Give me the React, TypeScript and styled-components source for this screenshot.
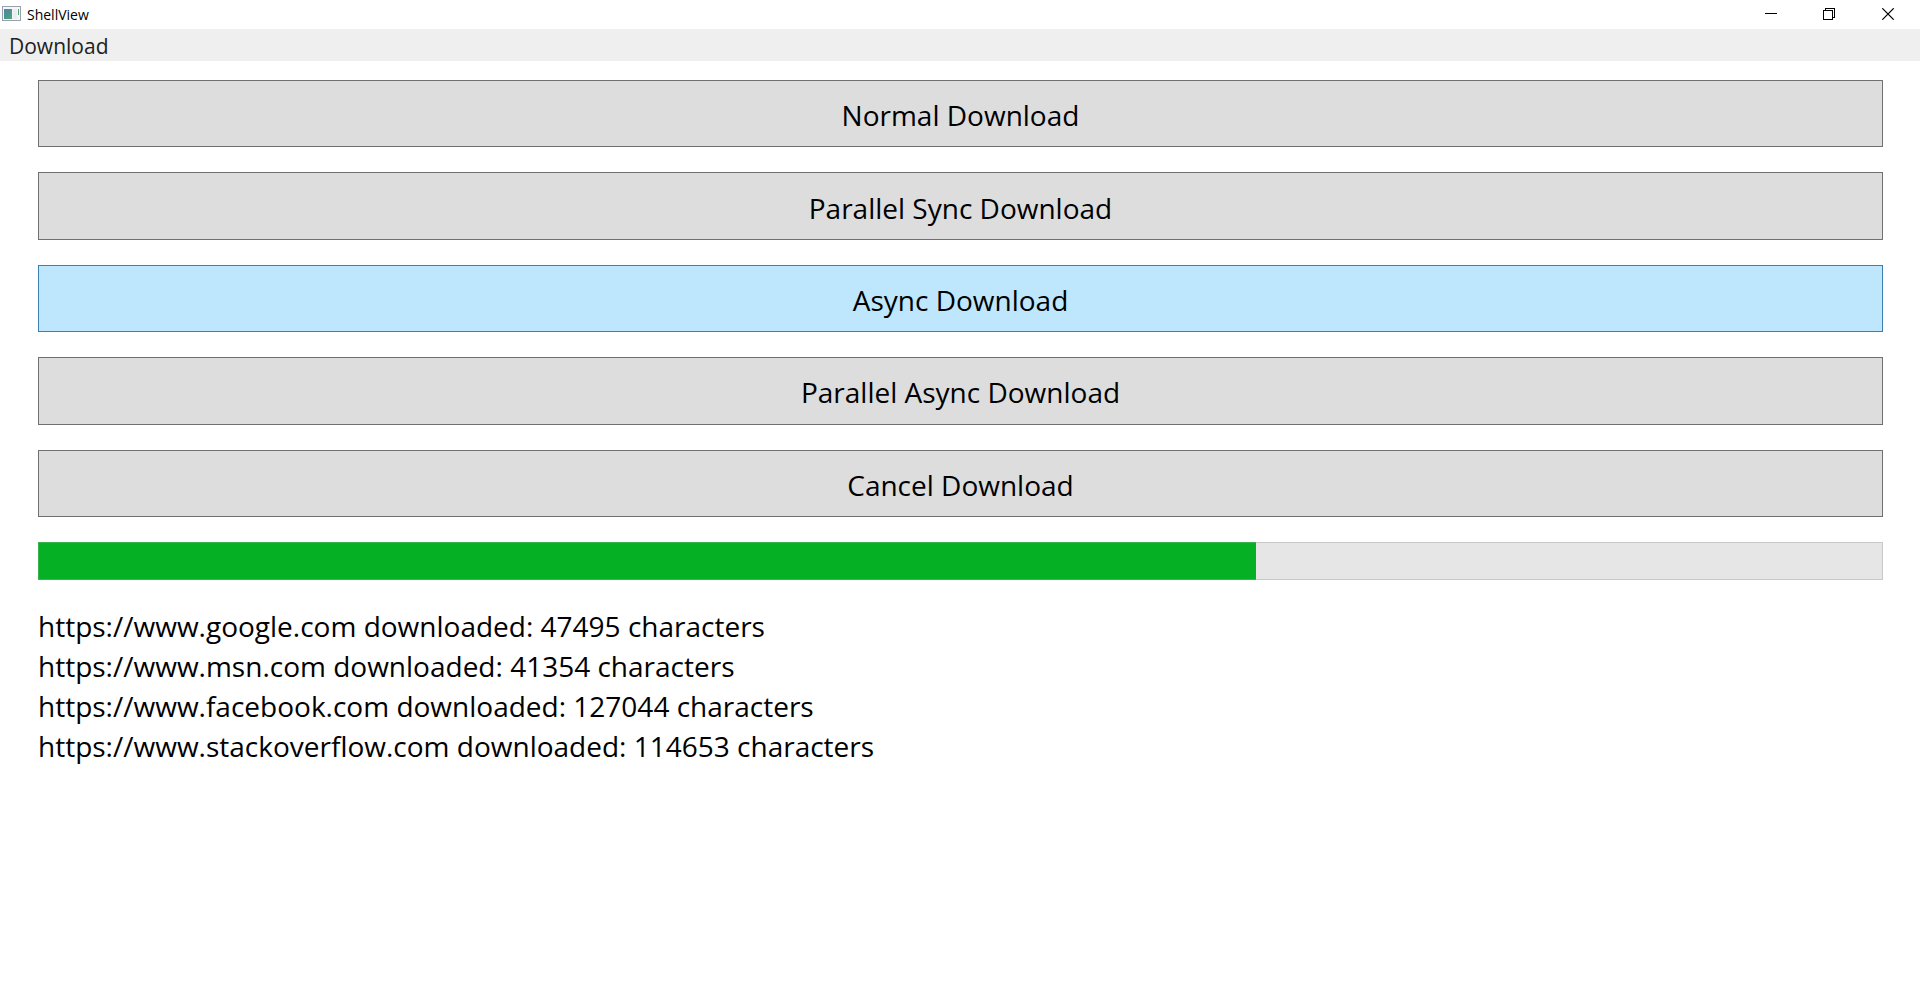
import React from "react";
import styled, { createGlobalStyle } from "styled-components";

const GlobalStyle = createGlobalStyle`
  *, *::before, *::after { box-sizing: border-box; }
  body {
    margin: 0;
    background: #ffffff;
    color: #000000;
    font-family: "Segoe UI", "Open Sans", "Noto Sans", sans-serif;
  }
`;

const Shell = styled.div`
  display: flex;
  flex-direction: column;
  min-height: 100vh;
`;

const TitleBar = styled.header`
  display: flex;
  align-items: flex-start;
  height: 29px;
  padding: 0 2px;
`;

const Title = styled.h1`
  flex: 1;
  margin: 0;
  padding-left: 5px;
  font-size: 14px;
  font-weight: 400;
  line-height: 30px;
`;

const WindowButton = styled.button`
  display: flex;
  align-items: center;
  justify-content: center;
  width: 59px;
  height: 28px;
  padding: 0;
  border: 0;
  background: transparent;
`;

const MenuBar = styled.nav`
  display: flex;
  height: 32px;
  background: #efefef;
`;

const MenuItem = styled.button`
  padding: 2px 9px 0;
  border: 0;
  background: transparent;
  color: #212121;
  font-family: inherit;
  font-size: 21px;
  line-height: 30px;
`;

const Content = styled.main`
  display: flex;
  flex-direction: column;
  gap: 25px;
  padding: 19px 37px 25px 38px;
`;

const Actions = styled.div`
  display: grid;
  grid-auto-rows: 1fr;
  gap: 25px;
  min-height: 437px;
`;

const ActionButton = styled.button<{ $active?: boolean }>`
  padding: 3px 0 0;
  border: 1px solid ${({ $active }) => ($active ? "#3c7fb1" : "#707070")};
  background: ${({ $active }) => ($active ? "#bee6fd" : "#dddddd")};
  color: #000000;
  font-family: inherit;
  font-size: 28px;
  line-height: 40px;
`;

const Progress = styled.progress`
  appearance: none;
  display: block;
  width: 100%;
  height: 38px;
  border: 0;
  background: #e6e6e6;

  &::-webkit-progress-bar {
    background: #e6e6e6;
    box-shadow: inset 0 0 0 1px #c9c9c9;
  }
  &::-webkit-progress-value {
    background: #06b025;
    box-shadow: inset 0 1px #38b44f, inset 0 -1px #38b44f, inset 1px 0 #38b44f;
  }
`;

const Results = styled.ul`
  margin: 0;
  padding: 1px 0 0;
  list-style: none;
  font-size: 28px;
  line-height: 40px;
`;

const AppIconImage = styled.svg`
  margin-top: 6px;
`;

const AppIcon = () => (
  <AppIconImage width="20" height="16" viewBox="0 0 20 16" aria-hidden="true">
    <defs>
      <linearGradient id="pane" x1="0" y1="0" x2="1" y2="1">
        <stop offset="0" stopColor="#4a86a8" />
        <stop offset="1" stopColor="#4fa676" />
      </linearGradient>
    </defs>
    <rect x="0.5" y="0.5" width="18" height="14" fill="#f4f6f8" stroke="#99a2ac" />
    <rect x="2" y="3" width="8" height="10" fill="url(#pane)" />
    <rect x="11" y="3" width="4" height="10" fill="#e9eeee" />
    <rect x="16" y="3" width="1" height="6" fill="#4fa676" />
  </AppIconImage>
);

const actions = [
  "Normal Download",
  "Parallel Sync Download",
  "Async Download",
  "Parallel Async Download",
  "Cancel Download",
];

const results = [
  { url: "https://www.google.com", size: 47495 },
  { url: "https://www.msn.com", size: 41354 },
  { url: "https://www.facebook.com", size: 127044 },
  { url: "https://www.stackoverflow.com", size: 114653 },
];

export default function App() {
  const [active, setActive] = React.useState("Async Download");
  return (
    <Shell>
      <GlobalStyle />
      <TitleBar>
        <AppIcon />
        <Title>ShellView</Title>
        <WindowButton aria-label="Minimize">
          <svg width="13" height="12" viewBox="0 0 13 12" shapeRendering="crispEdges">
            <path d="M1 5.5H13" stroke="#000" />
          </svg>
        </WindowButton>
        <WindowButton aria-label="Restore">
          <svg width="13" height="12" viewBox="0 0 13 12" fill="none" stroke="#000" shapeRendering="crispEdges">
            <path d="M0.5 2.5H9.5V11.5H0.5ZM2.5 2.5V0.5H11.5V9.5H9.5" />
          </svg>
        </WindowButton>
        <WindowButton aria-label="Close">
          <svg width="13" height="12" viewBox="0 0 13 12" stroke="#000">
            <path d="M0.3 0.3L11.7 11.7M11.7 0.3L0.3 11.7" strokeWidth="1.2" />
          </svg>
        </WindowButton>
      </TitleBar>
      <MenuBar>
        <MenuItem>Download</MenuItem>
      </MenuBar>
      <Content>
        <Actions>
          {actions.map((label) => (
            <ActionButton key={label} $active={label === active} onClick={() => setActive(label)}>
              {label}
            </ActionButton>
          ))}
        </Actions>
        <Progress aria-label="Download progress" value={66} max={100} />
        <Results>
          {results.map(({ url, size }) => (
            <li key={url}>
              {url} downloaded: {size} characters
            </li>
          ))}
        </Results>
      </Content>
    </Shell>
  );
}
